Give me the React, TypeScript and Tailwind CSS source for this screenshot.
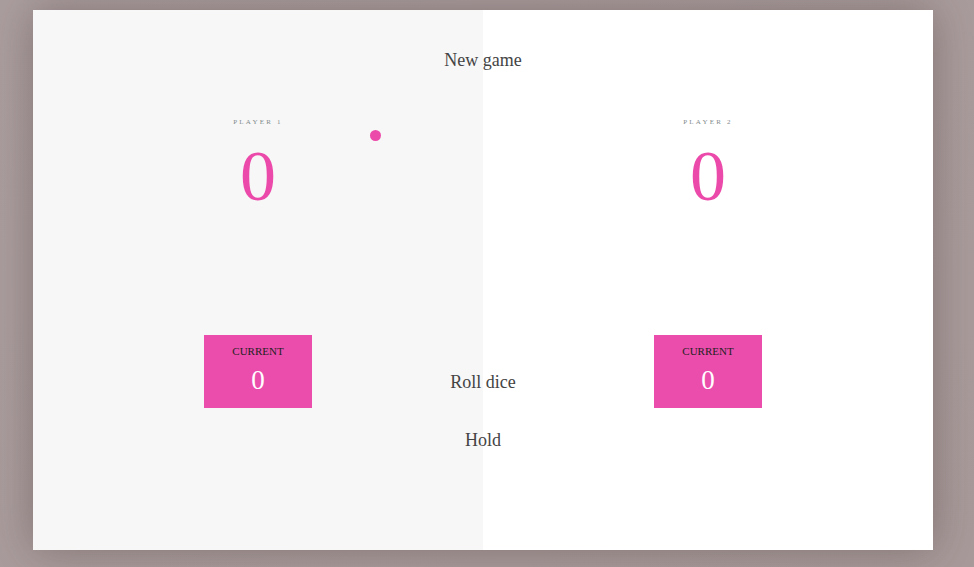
import React from "react";

function Player({ label }: { label: string }) {
  return (
    <section className="flex w-1/2 flex-col items-center pt-[107px]">
      <div className="text-[7px] leading-[10px] tracking-[2.2px] text-[#7f8a8a] uppercase">{label}</div>
      <div className="mt-[13px] text-[72px] leading-[72px] text-[#ec4aaa]">0</div>
      <div className="mt-[123px] flex h-[73px] w-[108px] flex-col items-center bg-[#eb4dac] pt-[9px]">
        <div className="text-[11px] leading-[14px] text-[#222]">CURRENT</div>
        <div className="mt-[6px] text-[27px] leading-[32px] text-white">0</div>
      </div>
    </section>
  );
}

export default function App() {
  return (
    <div
      className="h-[567px] w-full bg-gradient-to-br from-[#ab9e9e] to-[#a89a9a] pl-[33px] pt-[10px]"
      style={{ fontFamily: '"Liberation Serif", "Times New Roman", serif' }}
    >
      <main className="relative flex h-[540px] w-[900px] shadow-[0_0_40px_rgba(60,40,40,0.35)]">
        <div className="flex w-full">
          <div className="flex w-1/2 bg-[#f7f7f7]"></div>
          <div className="flex w-1/2 bg-white"></div>
        </div>
        <div className="absolute inset-0 flex">
          <Player label="Player 1" />
          <Player label="Player 2" />
        </div>
        <div className="absolute left-[337px] top-[120px] h-[11px] w-[11px] rounded-full bg-[#ec4aaa]"></div>
        <button className="absolute left-1/2 top-[39px] -translate-x-1/2 text-[18px] leading-[22px] text-[#444]">New game</button>
        <button className="absolute left-1/2 top-[361px] -translate-x-1/2 text-[18px] leading-[22px] text-[#444]">Roll dice</button>
        <button className="absolute left-1/2 top-[419px] -translate-x-1/2 text-[18px] leading-[22px] text-[#444]">Hold</button>
      </main>
    </div>
  );
}
